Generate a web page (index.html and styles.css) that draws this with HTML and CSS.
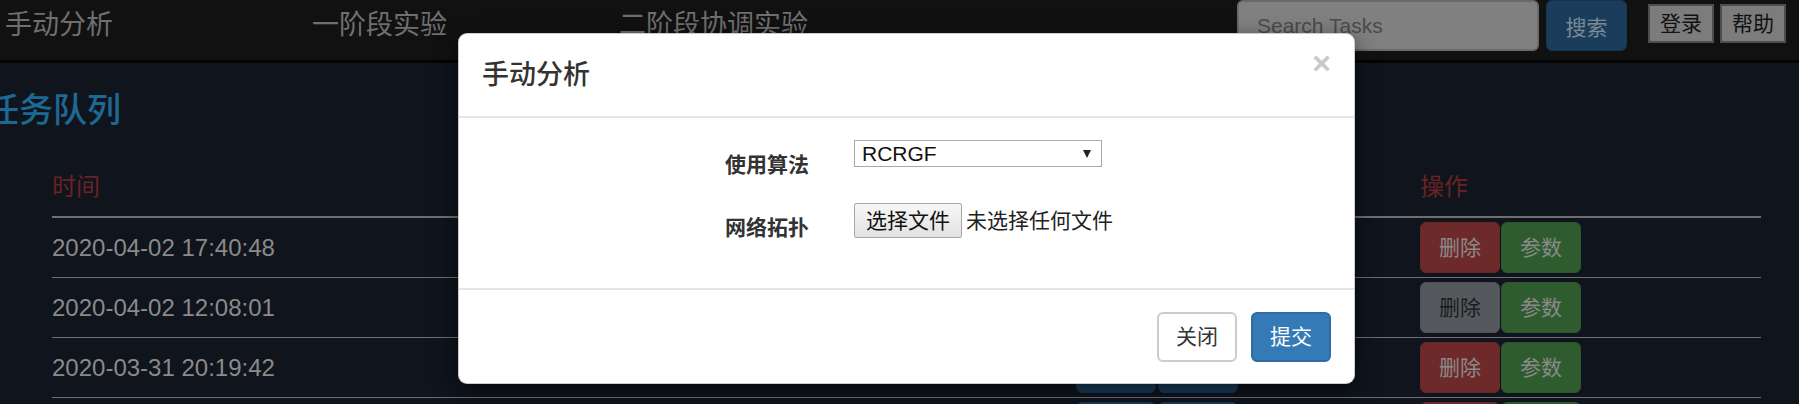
FILE: index.html
```html
<!DOCTYPE html>
<html lang="zh-CN">
<head>
<meta charset="utf-8">
<title>任务队列</title>
<link rel="stylesheet" href="styles.css">
</head>
<body>
<header class="navbar">
  <nav class="nav-links">
    <a class="nav-link">手动分析</a>
    <a class="nav-link">一阶段实验</a>
    <a class="nav-link">二阶段协调实验</a>
  </nav>
  <div class="nav-right">
    <form class="search">
      <input class="search-input" type="text" placeholder="Search Tasks">
      <button class="search-btn" type="button">搜索</button>
    </form>
    <div class="user-btns">
      <button class="nav-btn" type="button">登录</button>
      <button class="nav-btn" type="button">帮助</button>
    </div>
  </div>
</header>

<main class="content">
  <h3 class="page-title">任务队列</h3>
  <div class="task-table">
    <div class="trow thead">
      <div class="th">时间</div>
      <div class="th"></div>
      <div class="th">操作</div>
    </div>
    <div class="trow">
      <div class="td date">2020-04-02 17:40:48</div>
      <div class="td btns"><button class="btn-s blue">结果</button><button class="btn-s blue">下载</button></div>
      <div class="td btns tight"><button class="btn-s red">删除</button><button class="btn-s green">参数</button></div>
    </div>
    <div class="trow">
      <div class="td date">2020-04-02 12:08:01</div>
      <div class="td btns"><button class="btn-s blue">结果</button><button class="btn-s blue">下载</button></div>
      <div class="td btns tight"><button class="btn-s gray">删除</button><button class="btn-s green">参数</button></div>
    </div>
    <div class="trow">
      <div class="td date">2020-03-31 20:19:42</div>
      <div class="td btns"><button class="btn-s blue">结果</button><button class="btn-s blue">下载</button></div>
      <div class="td btns tight"><button class="btn-s red">删除</button><button class="btn-s green">参数</button></div>
    </div>
    <div class="trow">
      <div class="td date">2020-03-30 09:12:05</div>
      <div class="td btns"><button class="btn-s blue">结果</button><button class="btn-s blue">下载</button></div>
      <div class="td btns tight"><button class="btn-s red">删除</button><button class="btn-s green">参数</button></div>
    </div>
  </div>
</main>

<div class="modal">
  <div class="modal-header">
    <h4 class="modal-title">手动分析</h4>
    <button class="close" type="button">×</button>
  </div>
  <div class="modal-body">
    <div class="form-row">
      <label class="form-label">使用算法</label>
      <div class="field">
        <div class="select-wrap">
          <select class="algo-select">
            <option>RCRGF</option>
          </select>
        </div>
      </div>
    </div>
    <div class="form-row">
      <label class="form-label">网络拓扑</label>
      <div class="field">
        <div class="file-field">
          <button class="file-btn" type="button">选择文件</button>
          <span class="file-name">未选择任何文件</span>
        </div>
      </div>
    </div>
  </div>
  <div class="modal-footer">
    <button class="btn btn-default" type="button">关闭</button>
    <button class="btn btn-primary" type="button">提交</button>
  </div>
</div>
</body>
</html>
```

FILE: styles.css
```css
* { box-sizing: border-box; }

html, body {
  margin: 0;
  padding: 0;
}

body {
  width: 1799px;
  height: 404px;
  overflow: hidden;
  position: relative;
  background: #0f141d;
  font-family: "Liberation Sans", "Noto Sans CJK SC", sans-serif;
  color: #333;
}

button, input, select {
  font-family: "Liberation Sans", "Noto Sans CJK SC", sans-serif;
}

/* ---------- navbar ---------- */
.navbar {
  display: flex;
  height: 63px;
  background: #111;
  border-bottom: 3px solid #040404;
}

.nav-links {
  display: flex;
  align-items: center;
  height: 50px;
  padding-left: 5px;
}

.nav-link {
  width: 307px;
  font-size: 27px;
  line-height: 36px;
  color: #6f6f6f;
}

.nav-right {
  margin-left: auto;
  display: flex;
  align-items: flex-start;
  padding-right: 13px;
}

.search {
  display: flex;
  gap: 7px;
  margin: 0;
}

.search-input {
  width: 302px;
  height: 51px;
  background: #808080;
  border: 2px solid #6a6a6a;
  border-radius: 6px;
  padding: 0 18px;
  font-size: 21px;
  color: #222;
  outline: none;
}

.search-input::placeholder {
  color: #4b4b4b;
}

.search-btn {
  width: 81px;
  height: 51px;
  background: #1a3d5c;
  border: 1px solid #17354f;
  border-radius: 6px;
  color: #7d8995;
  font-size: 21px;
  padding: 0;
}

.user-btns {
  display: flex;
  gap: 6px;
  margin-left: 21px;
  margin-top: 4px;
}

.nav-btn {
  width: 66px;
  height: 39px;
  background: #7c7c7c;
  border: 2px solid #4e4e4e;
  border-radius: 0;
  color: #111;
  font-size: 21px;
  line-height: 30px;
  padding: 0;
}

/* ---------- content ---------- */
.content {
  display: flex;
  flex-direction: column;
}

.page-title {
  margin: 27px 0 29px -15px;
  font-size: 34px;
  font-weight: 500;
  line-height: 40px;
  color: #1d6993;
}

.task-table {
  margin-left: 52px;
  width: 1709px;
}

.trow {
  display: grid;
  grid-template-columns: 1024px 344px 1fr;
  align-items: center;
  padding: 4px 0;
  border-bottom: 1px solid #6f6f6f;
}

.thead {
  height: 59px;
  align-items: end;
  padding: 0 0 12px;
  border-bottom: 2px solid #6f6f6f;
}

.th {
  font-size: 24px;
  line-height: 34px;
  color: #6a2222;
}

.date {
  font-size: 24px;
  line-height: 34px;
  color: #8a8a8a;
}

.btns {
  display: flex;
  gap: 2px;
}

.btns.tight {
  gap: 1px;
}

.btn-s {
  width: 80px;
  height: 51px;
  border: 1px solid transparent;
  border-radius: 6px;
  font-size: 21px;
  line-height: 30px;
  padding: 0;
  color: #8a8a8a;
}

.btn-s.red {
  background: #6e2a2a;
  border-color: #672726;
}

.btn-s.green {
  background: #2e5c2e;
  border-color: #2b562b;
}

.btn-s.gray {
  background: #55585c;
  border-color: #505256;
  color: #1c1c1c;
}

.btn-s.blue {
  background: #1a3d5c;
  border-color: #183752;
  color: #7d8995;
}

/* ---------- modal ---------- */
.modal {
  position: absolute;
  left: 458px;
  top: 33px;
  width: 897px;
  background: #fff;
  border: 1px solid rgba(0, 0, 0, 0.2);
  border-radius: 9px;
  box-shadow: 0 7px 22px rgba(0, 0, 0, 0.55);
}

.modal-header {
  display: flex;
  justify-content: space-between;
  align-items: flex-start;
  padding: 22px 23px 21px;
  border-bottom: 2px solid #e5e5e5;
}

.modal-title {
  margin: 0;
  font-size: 27px;
  font-weight: 500;
  line-height: 39px;
  color: #333;
}

.close {
  margin-top: -9px;
  padding: 0;
  background: none;
  border: 0;
  font-size: 32px;
  font-weight: bold;
  line-height: 1;
  color: #c9c9c9;
}

.modal-body {
  padding: 22px 23px;
}

.form-row {
  display: grid;
  grid-template-columns: 327px 1fr;
  column-gap: 45px;
  min-height: 40px;
  margin-bottom: 23px;
}

.form-label {
  text-align: right;
  font-size: 21px;
  font-weight: bold;
  line-height: 30px;
  padding-top: 10px;
  color: #333;
}

.select-wrap {
  position: relative;
  width: 248px;
  height: 27px;
}

.select-wrap::after {
  content: "";
  position: absolute;
  right: 11px;
  top: 10px;
  border-left: 4px solid transparent;
  border-right: 4px solid transparent;
  border-top: 8px solid #222;
  pointer-events: none;
}

.algo-select {
  appearance: none;
  -webkit-appearance: none;
  width: 248px;
  height: 27px;
  border: 1px solid #a9a9a9;
  border-radius: 0;
  background: #fff;
  padding: 0 0 0 7px;
  font-size: 21px;
  line-height: 25px;
  color: #111;
}

.file-field {
  display: flex;
  align-items: center;
  gap: 4px;
  height: 35px;
}

.file-btn {
  width: 108px;
  height: 35px;
  padding: 0;
  background: linear-gradient(#f7f7f7, #e2e2e2);
  border: 1px solid #a6a6a6;
  border-radius: 2px;
  font-size: 21px;
  line-height: 30px;
  color: #111;
}

.file-name {
  font-size: 21px;
  line-height: 30px;
  color: #222;
}

.modal-footer {
  display: flex;
  justify-content: flex-end;
  gap: 14px;
  padding: 22px 23px 21px;
  border-top: 2px solid #e5e5e5;
}

.btn {
  height: 50px;
  padding: 0 17px;
  border: 2px solid transparent;
  border-radius: 6px;
  font-size: 21px;
  line-height: 30px;
}

.btn-default {
  background: #fff;
  border-color: #ccc;
  color: #333;
}

.btn-primary {
  background: #337ab7;
  border-color: #2e6da4;
  color: #fff;
}
```
